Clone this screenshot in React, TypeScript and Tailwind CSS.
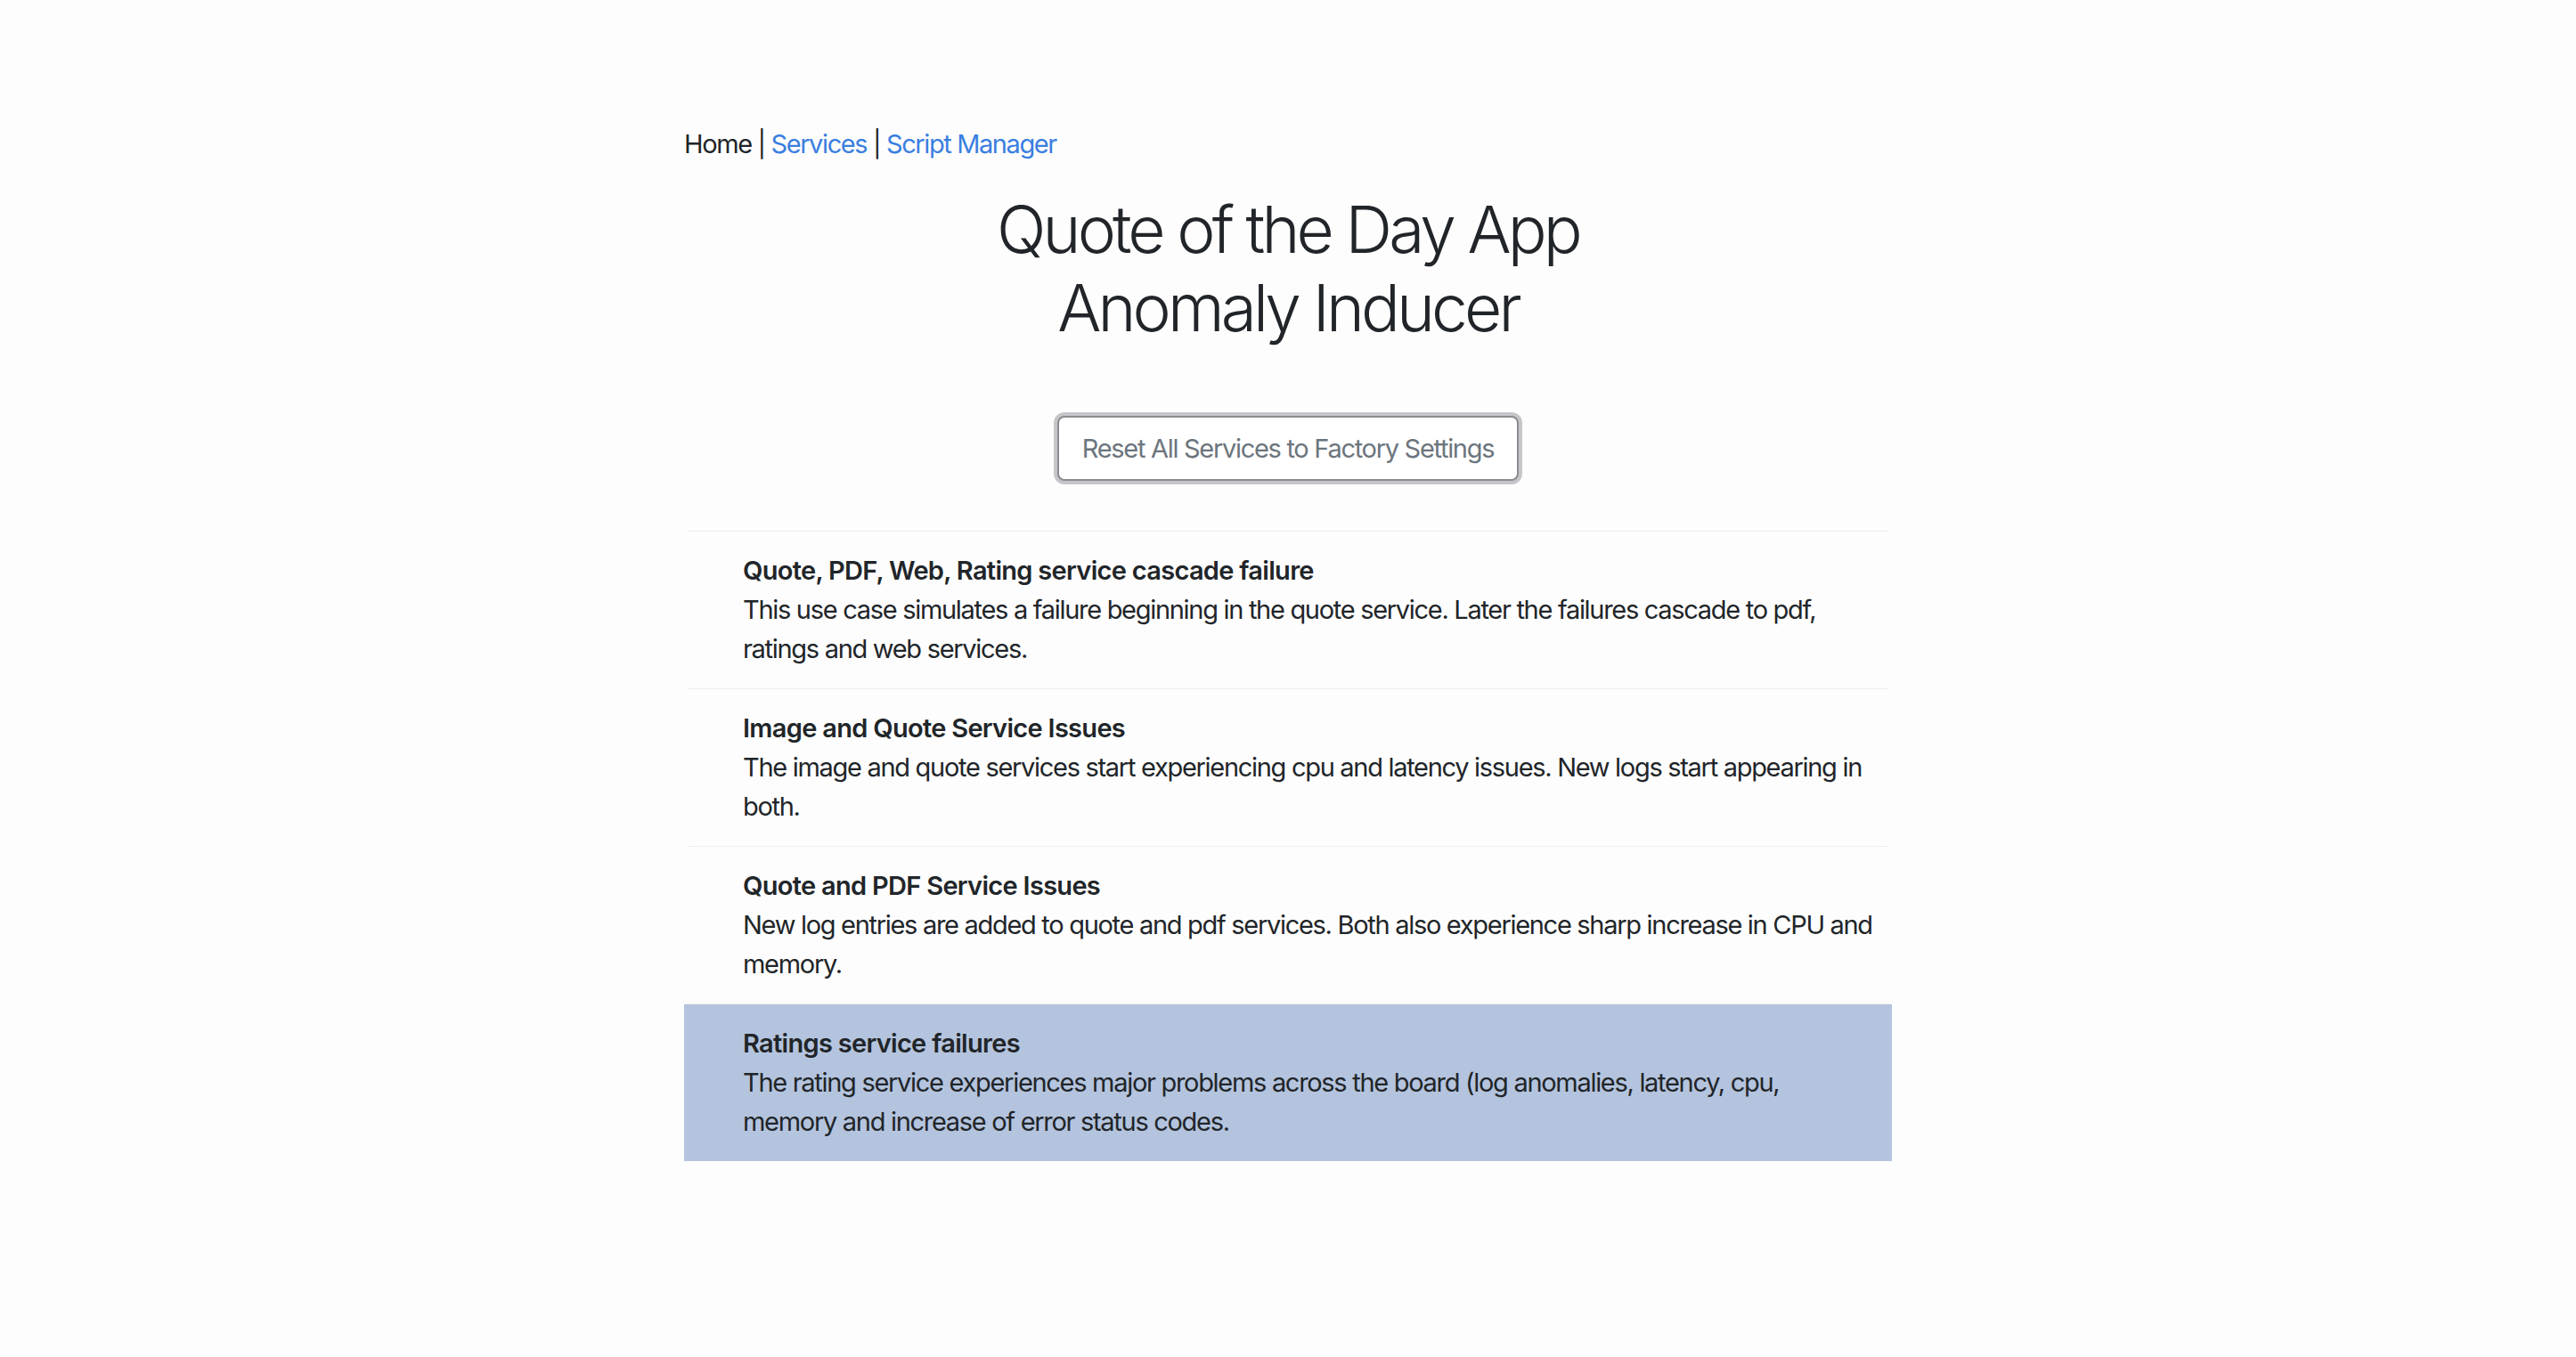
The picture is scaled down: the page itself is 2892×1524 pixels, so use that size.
import React from "react";

const items = [
  {
    title: "Quote, PDF, Web, Rating service cascade failure",
    lines: [
      "This use case simulates a failure beginning in the quote service. Later the failures cascade to pdf,",
      "ratings and web services.",
    ],
  },
  {
    title: "Image and Quote Service Issues",
    lines: [
      "The image and quote services start experiencing cpu and latency issues. New logs start appearing in",
      "both.",
    ],
  },
  {
    title: "Quote and PDF Service Issues",
    lines: [
      "New log entries are added to quote and pdf services. Both also experience sharp increase in CPU and",
      "memory.",
    ],
  },
  {
    title: "Ratings service failures",
    lines: [
      "The rating service experiences major problems across the board (log anomalies, latency, cpu,",
      "memory and increase of error status codes.",
    ],
    active: true,
  },
];

export default function App() {
  return (
    <div className="min-h-screen w-full bg-[#fdfdfd] font-['Inter','Liberation_Sans',sans-serif] text-[#212529]">
      <div className="mx-auto w-[1356px] pt-[140px]">
        <nav className="text-[29px] leading-[44px] tracking-[-1.4px]">
          <span>Home</span>
          <span> | </span>
          <a className="text-[#3a7fe0]">Services</a>
          <span> | </span>
          <a className="text-[#3a7fe0]">Script Manager</a>
        </nav>
        <h1 className="mt-[30px] text-center text-[73px] font-light leading-[88px] tracking-[-3.9px] text-[#212529]">
          Quote of the Day App
          <br />
          Anomaly Inducer
        </h1>
        <div className="mt-[77px] flex justify-center">
          <button className="h-[73px] w-[518px] rounded-[8px] border-[2px] border-[#8a8c8f] bg-white text-[29px] tracking-[-1.3px] text-[#6c757d] shadow-[0_0_0_4px_#c4c6c9]">
            Reset All Services to Factory Settings
          </button>
        </div>
        <div className="mt-[56px]">
          {items.map((it, i) => (
            <div
              key={i}
              className={
                it.active
                  ? "border-t border-[#eeeeee] bg-[#b4c4de] py-[22px] pl-[66px] pr-[10px]"
                  : "mx-[4px] border-t border-[#eeeeee] py-[22px] pl-[62px] pr-[6px]"
              }
            >
              <div className="text-[29px] font-semibold leading-[44px] tracking-[-0.7px]">{it.title}</div>
              <div className="text-[29px] leading-[44px] tracking-[-1.3px]">
                {it.lines.map((l, j) => (
                  <div key={j} className="whitespace-nowrap">
                    {l}
                  </div>
                ))}
              </div>
            </div>
          ))}
        </div>
      </div>
    </div>
  );
}
